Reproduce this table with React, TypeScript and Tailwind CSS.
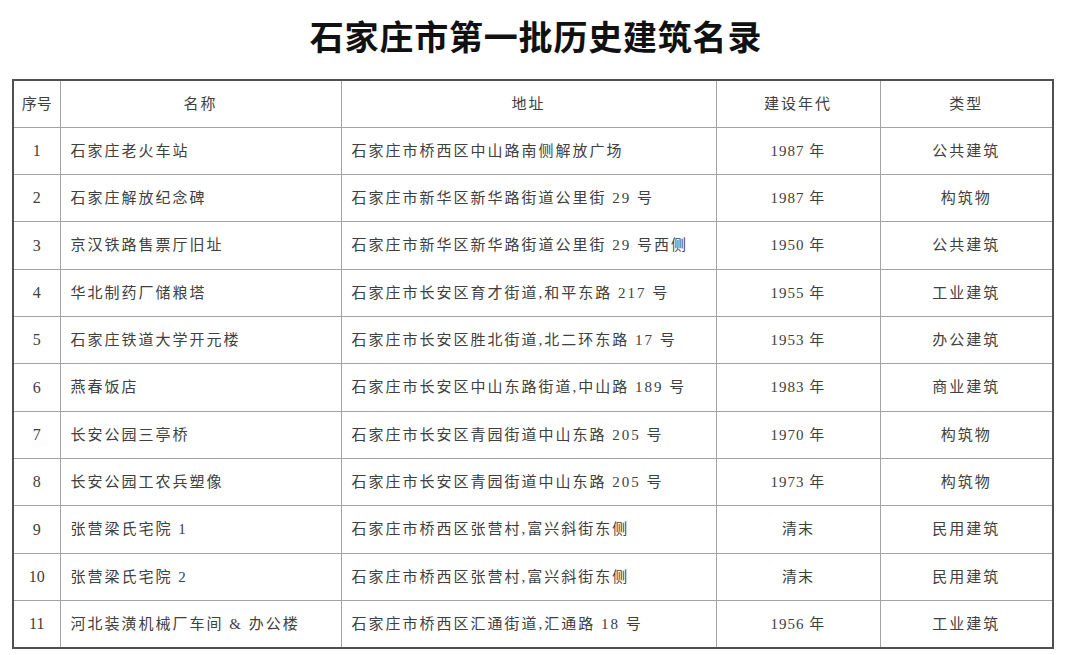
const rows = [
  ["1", "石家庄老火车站", "石家庄市桥西区中山路南侧解放广场", "1987 年", "公共建筑"],
  ["2", "石家庄解放纪念碑", "石家庄市新华区新华路街道公里街 29 号", "1987 年", "构筑物"],
  ["3", "京汉铁路售票厅旧址", "石家庄市新华区新华路街道公里街 29 号西侧", "1950 年", "公共建筑"],
  ["4", "华北制药厂储粮塔", "石家庄市长安区育才街道,和平东路 217 号", "1955 年", "工业建筑"],
  ["5", "石家庄铁道大学开元楼", "石家庄市长安区胜北街道,北二环东路 17 号", "1953 年", "办公建筑"],
  ["6", "燕春饭店", "石家庄市长安区中山东路街道,中山路 189 号", "1983 年", "商业建筑"],
  ["7", "长安公园三亭桥", "石家庄市长安区青园街道中山东路 205 号", "1970 年", "构筑物"],
  ["8", "长安公园工农兵塑像", "石家庄市长安区青园街道中山东路 205 号", "1973 年", "构筑物"],
  ["9", "张营梁氏宅院 1", "石家庄市桥西区张营村,富兴斜街东侧", "清末", "民用建筑"],
  ["10", "张营梁氏宅院 2", "石家庄市桥西区张营村,富兴斜街东侧", "清末", "民用建筑"],
  ["11", "河北装潢机械厂车间 & 办公楼", "石家庄市桥西区汇通街道,汇通路 18 号", "1956 年", "工业建筑"],
]

const cell = "border border-[#a3a3a3] h-[47.33px] p-0"

export default function App() {
  return (
    <div className="w-[1080px] h-[655px] bg-white overflow-hidden font-['Liberation_Serif','Noto_Sans_CJK_SC',serif] text-[#404040]">
      <h1 className="pt-[20px] h-[79px] text-center text-[34px] leading-[38px] font-bold tracking-[0.8px] text-[#111] pr-[8px]">
        石家庄市第一批历史建筑名录
      </h1>
      <table className="ml-[12px] w-[1042px] table-fixed border-collapse border-2 border-[#505050] text-[15px] tracking-[2px]">
        <colgroup>
          <col className="w-[47px]" />
          <col className="w-[281px]" />
          <col className="w-[375px]" />
          <col className="w-[164px]" />
          <col />
        </colgroup>
        <thead>
          <tr>
            <th className={cell + " font-normal text-center tracking-[0px]"}>序号</th>
            <th className={cell + " font-normal text-center"}>名称</th>
            <th className={cell + " font-normal text-center"}>地址</th>
            <th className={cell + " font-normal text-center"}>建设年代</th>
            <th className={cell + " font-normal text-center"}>类型</th>
          </tr>
        </thead>
        <tbody>
          {rows.map((r) => (
            <tr key={r[0]}>
              <td className={cell + " text-center tracking-[0px] text-[16px]"}>{r[0]}</td>
              <td className={cell + " pl-[10px]"}>{r[1]}</td>
              <td className={cell + " pl-[10px]"}>{r[2]}</td>
              <td className={cell + " text-center tracking-[1px]"}>{r[3]}</td>
              <td className={cell + " text-center"}>{r[4]}</td>
            </tr>
          ))}
        </tbody>
      </table>
    </div>
  )
}
